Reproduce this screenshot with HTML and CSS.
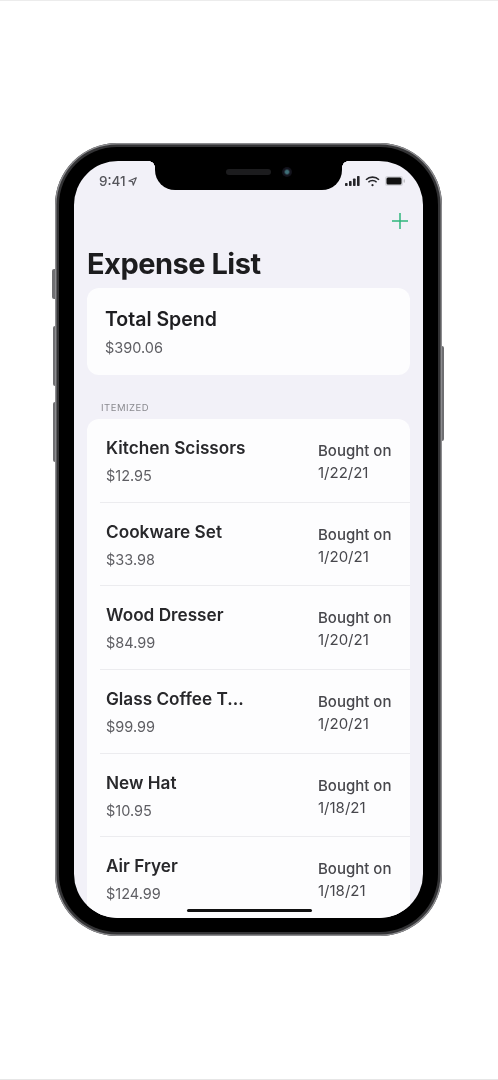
FILE: index.html
```html
<!DOCTYPE html>
<html>
<head>
  <meta charset="UTF-8">
  <title>Expense List</title>
  <link rel="stylesheet" href="styles.css">
</head>
<body>
  <div class="phone">
    <span class="side-btn mute"></span>
    <span class="side-btn vol-up"></span>
    <span class="side-btn vol-down"></span>
    <span class="side-btn power"></span>
    <div class="bezel">
      <div class="screen">
        <div class="notch">
          <span class="speaker"></span>
          <span class="camera"></span>
        </div>

        <div class="status-bar">
          <div class="status-time">
            9:41
            <svg class="location" width="9" height="9" viewBox="0 0 10 10"><path d="M9.2.8 1 4.4l4 .7.8 4z" fill="none" stroke="#55555b" stroke-width="1.3" stroke-linejoin="round"/></svg>
          </div>
          <div class="status-icons">
            <svg width="15" height="10" viewBox="0 0 15 10" fill="#26262a"><rect x="0" y="7" width="2.6" height="3" rx=".7"/><rect x="4" y="5" width="2.6" height="5" rx=".7"/><rect x="8" y="2.5" width="2.6" height="7.5" rx=".7"/><rect x="12" y="0" width="2.6" height="10" rx=".7"/></svg>
            <svg width="15" height="11" viewBox="0 0 15 11" fill="none" stroke="#26262a" stroke-width="1.6"><path d="M1 3.8a9.2 9.2 0 0 1 13 0"/><path d="M3.4 6.2a5.8 5.8 0 0 1 8.2 0"/><circle cx="7.5" cy="9.2" r="1.1" fill="#26262a" stroke="none"/></svg>
            <svg width="20" height="10" viewBox="0 0 20 10"><rect x="0" y="0" width="18" height="10" rx="2.5" fill="#d6d6dc"/><rect x="1.5" y="1.5" width="15" height="7" rx="1.5" fill="#111"/><rect x="18.5" y="3.2" width="1.5" height="3.6" rx=".7" fill="#c4c4c9"/></svg>
          </div>
        </div>

        <div class="nav-bar">
          <svg class="add-btn" width="16" height="16" viewBox="0 0 16 16"><path d="M8 0v16M0 8h16" stroke="#2fb67c" stroke-width="1.5"/></svg>
        </div>

        <h1 class="title">Expense List</h1>

        <section class="card total-card">
          <div class="item-name">Total Spend</div>
          <div class="item-price">$390.06</div>
        </section>

        <div class="section-label">ITEMIZED</div>

        <section class="card">
          <div class="row">
            <div class="row-main">
              <div class="item-name">Kitchen Scissors</div>
              <div class="item-price">$12.95</div>
            </div>
            <div class="row-date"><span>Bought on</span><span class="date">1/22/21</span></div>
          </div>
          <div class="row">
            <div class="row-main">
              <div class="item-name">Cookware Set</div>
              <div class="item-price">$33.98</div>
            </div>
            <div class="row-date"><span>Bought on</span><span class="date">1/20/21</span></div>
          </div>
          <div class="row">
            <div class="row-main">
              <div class="item-name">Wood Dresser</div>
              <div class="item-price">$84.99</div>
            </div>
            <div class="row-date"><span>Bought on</span><span class="date">1/20/21</span></div>
          </div>
          <div class="row">
            <div class="row-main">
              <div class="item-name">Glass Coffee T...</div>
              <div class="item-price">$99.99</div>
            </div>
            <div class="row-date"><span>Bought on</span><span class="date">1/20/21</span></div>
          </div>
          <div class="row">
            <div class="row-main">
              <div class="item-name">New Hat</div>
              <div class="item-price">$10.95</div>
            </div>
            <div class="row-date"><span>Bought on</span><span class="date">1/18/21</span></div>
          </div>
          <div class="row">
            <div class="row-main">
              <div class="item-name">Air Fryer</div>
              <div class="item-price">$124.99</div>
            </div>
            <div class="row-date"><span>Bought on</span><span class="date">1/18/21</span></div>
          </div>
        </section>

        <div class="home-bar"></div>
      </div>
    </div>
  </div>
</body>
</html>
```

FILE: styles.css
```css
html, body {
  height: 100%;
}
body {
  box-sizing: border-box;
  margin: 0;
  border-top: 1px solid #ececec;
  border-bottom: 1px solid #e6e6e6;
  background: #fff;
  font-family: Inter, "Liberation Sans", sans-serif;
  color: #1c1c1e;
  overflow: hidden;
}
.phone {
  position: relative;
  box-sizing: border-box;
  width: 387px;
  height: 793px;
  margin: 142px 0 0 55px;
  padding: 4px;
  border-radius: 62px;
  background: #333335;
  box-shadow: inset 0 0 0 1.5px #8c8c8f;
  filter: blur(0.25px);
}
.side-btn {
  position: absolute;
  width: 3px;
  background: #6f6f72;
}
.mute {
  left: -3px;
  top: 126px;
  height: 30px;
  border-radius: 2px 0 0 2px;
}
.vol-up {
  left: -2px;
  width: 2px;
  top: 183px;
  height: 60px;
  border-radius: 2px 0 0 2px;
}
.vol-down {
  left: -2px;
  width: 2px;
  top: 259px;
  height: 60px;
  border-radius: 2px 0 0 2px;
}
.power {
  right: -2px;
  width: 2px;
  top: 203px;
  height: 95px;
  border-radius: 0 2px 2px 0;
}
.bezel {
  box-sizing: border-box;
  height: 100%;
  padding: 14px 15px;
  border-radius: 58px;
  background: #000;
}
.screen {
  position: relative;
  height: 100%;
  padding: 0 13px;
  box-sizing: border-box;
  border-radius: 44px;
  background: #f2f1f8;
  overflow: hidden;
}
.notch {
  position: absolute;
  left: 81px;
  top: 0;
  width: 187px;
  height: 29px;
  border-radius: 0 0 20px 20px;
  background: #000;
}
.notch::before,
.notch::after {
  content: "";
  position: absolute;
  top: 0;
  width: 6px;
  height: 6px;
}
.notch::before {
  left: -6px;
  background: radial-gradient(circle at 0 100%, transparent 5.6px, #000 6px);
}
.notch::after {
  right: -6px;
  background: radial-gradient(circle at 100% 100%, transparent 5.6px, #000 6px);
}
.speaker {
  position: absolute;
  left: 71px;
  top: 8px;
  width: 45px;
  height: 6px;
  border-radius: 3px;
  background: #1c1c1e;
}
.camera {
  position: absolute;
  left: 127px;
  top: 6px;
  width: 10px;
  height: 10px;
  border-radius: 50%;
  background: radial-gradient(circle, #3f6f78 0 20%, #15151f 45%, #0a0a10 100%);
}
.status-bar {
  display: flex;
  justify-content: space-between;
  align-items: center;
  height: 20px;
  padding: 10px 5px 0 12px;
}
.status-time {
  display: flex;
  align-items: center;
  gap: 2px;
  font-size: 13.5px;
  font-weight: 500;
  color: #55555b;
}
.status-icons {
  display: flex;
  align-items: center;
  gap: 5px;
}
.nav-bar {
  display: flex;
  justify-content: flex-end;
  height: 31px;
  padding-top: 22px;
  padding-right: 2px;
}
.add-btn {
  display: block;
}
.title {
  margin: 1px 0 0;
  font-size: 29px;
  line-height: 38px;
  font-weight: 700;
  letter-spacing: -0.5px;
  color: #1c1c1e;
}
.card {
  border-radius: 12px;
  background: #fdfdfe;
}
.total-card {
  height: 87px;
  margin-top: 5px;
  padding: 19px 18px 0;
  box-sizing: border-box;
}
.section-label {
  margin: 26px 0 4px 14px;
  font-size: 9.5px;
  line-height: 14px;
  letter-spacing: 0.5px;
  color: #8a8a8f;
}
.item-name {
  font-size: 17.2px;
  line-height: 24px;
  font-weight: 600;
  color: #28282b;
}
.total-card .item-name {
  font-size: 19.5px;
  color: #1e1e21;
}
.item-price {
  margin-top: 7px;
  font-size: 14.5px;
  line-height: 18px;
  color: #5e5e63;
}
.total-card .item-price {
  margin-top: 8px;
}
.row {
  display: flex;
  justify-content: space-between;
  box-sizing: border-box;
  height: 83.7px;
  margin-left: 13px;
  padding: 17px 18px 0 6px;
  border-bottom: 1px solid #ececef;
}
.row:last-child {
  border-bottom: 0;
}
.row-date {
  display: flex;
  flex-direction: column;
  width: 74px;
  margin-top: 4px;
  font-size: 15px;
  line-height: 22px;
  font-weight: 500;
  color: #47474c;
}
.date {
  font-weight: 400;
}
.home-bar {
  position: absolute;
  left: 113px;
  bottom: 6px;
  width: 125px;
  height: 3.5px;
  border-radius: 2px;
  background: #111;
}
```
